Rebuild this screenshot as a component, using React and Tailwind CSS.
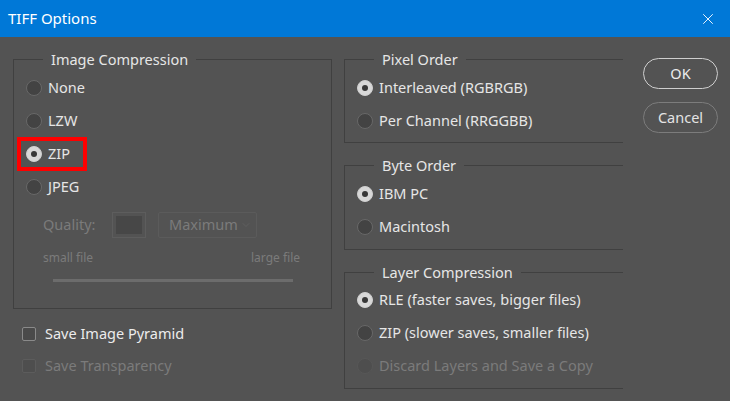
import { X, ChevronDown } from "lucide-react";

function Radio({ label, checked, disabled }) {
  let circle = "border-[#686868] bg-[#434343]";
  if (checked) circle = "border-[#cfcfcf] bg-[#d8d8d8]";
  if (disabled) circle = "border-[#575757] bg-[#4e4e4e]";
  return (
    <div className="flex h-[33px] items-center">
      <span className={`flex h-[16px] w-[16px] items-center justify-center rounded-full border ${circle}`}>
        {checked && <span className="h-[6px] w-[6px] rounded-full bg-[#383838]" />}
      </span>
      <span className={`ml-[6px] ${disabled ? "text-[#7b7b7b]" : "text-[#e6e6e6]"}`}>{label}</span>
    </div>
  );
}

function Group({ title, className, children }) {
  return (
    <fieldset className={`border border-[#404040] pl-[12px] ${className}`}>
      <legend className="ml-[17px] px-[8px] leading-[20px] text-[#e6e6e6]">{title}</legend>
      {children}
    </fieldset>
  );
}

export default function App() {
  return (
    <div className="h-[401px] w-[730px] overflow-hidden bg-[#535353] text-[14.5px] font-['Noto_Sans',sans-serif]">
      <div className="flex h-[37px] items-center justify-between bg-[#0078d7] pl-[8px] pr-[13px] text-white">
        <span className="text-[15px]">TIFF Options</span>
        <X size={18} strokeWidth={1.2} />
      </div>

      <div className="flex pl-[13px] pt-[12px]">
        <div className="w-[319px]">
          <Group title="Image Compression" className="h-[260px] pt-[2px]">
            <Radio label="None" />
            <Radio label="LZW" />
            <div className="relative">
              <Radio label="ZIP" checked />
              <div className="absolute left-[-9px] top-[0px] h-[34px] w-[70px] border-4 border-[#ff0000]" />
            </div>
            <Radio label="JPEG" />
            <div className="ml-[17px] mt-[9px] flex h-[26px] items-center text-[#7b7b7b]">
              <span className="w-[69px]">Quality:</span>
              <div className="h-[26px] w-[34px] border border-[#5d5d5d] p-[3px]">
                <div className="h-full w-full bg-[#474747]" />
              </div>
              <div className="ml-[12px] flex h-[26px] w-[99px] items-center justify-between rounded-[2px] border border-[#5b5b5b] pl-[10px] pr-[4px]">
                <span>Maximum</span>
                <ChevronDown size={12} strokeWidth={1} className="text-[#6a6a6a]" />
              </div>
            </div>
            <div className="ml-[17px] mr-[31px] mt-[12px] flex justify-between text-[12px] leading-[16px] text-[#7b7b7b]">
              <span>small file</span>
              <span>large file</span>
            </div>
            <div className="ml-[27px] mr-[38px] mt-[13px] h-[3px] bg-[#6c6c6c]" />
          </Group>

          <div className="mt-[9px] flex h-[32px] items-center pl-[9px]">
            <span className="h-[14px] w-[14px] rounded-[2px] border border-[#8a8a8a] bg-[#4a4a4a]" />
            <span className="ml-[9px] text-[#ececec]">Save Image Pyramid</span>
          </div>
          <div className="flex h-[32px] items-center pl-[9px]">
            <span className="h-[14px] w-[14px] rounded-[2px] border border-[#5c5c5c] bg-[#4e4e4e]" />
            <span className="ml-[9px] text-[#7b7b7b]">Save Transparency</span>
          </div>
        </div>

        <div className="ml-[12px] w-[279px]">
          <Group title="Pixel Order" className="h-[94px] border-r-0 pt-[2px]">
            <Radio label="Interleaved (RGBRGB)" checked />
            <Radio label="Per Channel (RRGGBB)" />
          </Group>
          <Group title="Byte Order" className="mt-[12px] h-[95px] border-r-0 pt-[2px]">
            <Radio label="IBM PC" checked />
            <Radio label="Macintosh" />
          </Group>
          <Group title="Layer Compression" className="mt-[12px] h-[127px] border-r-0 pt-[1px]">
            <Radio label="RLE (faster saves, bigger files)" checked />
            <Radio label="ZIP (slower saves, smaller files)" />
            <Radio label="Discard Layers and Save a Copy" disabled />
          </Group>
        </div>

        <div className="ml-[20px] flex w-[75px] flex-col pt-[9px]">
          <button className="h-[31px] rounded-full border border-[#cfcfcf] text-[#ececec]">OK</button>
          <button className="mt-[13px] h-[31px] rounded-full border border-[#7c7c7c] text-[#e4e4e4]">Cancel</button>
        </div>
      </div>
    </div>
  );
}
